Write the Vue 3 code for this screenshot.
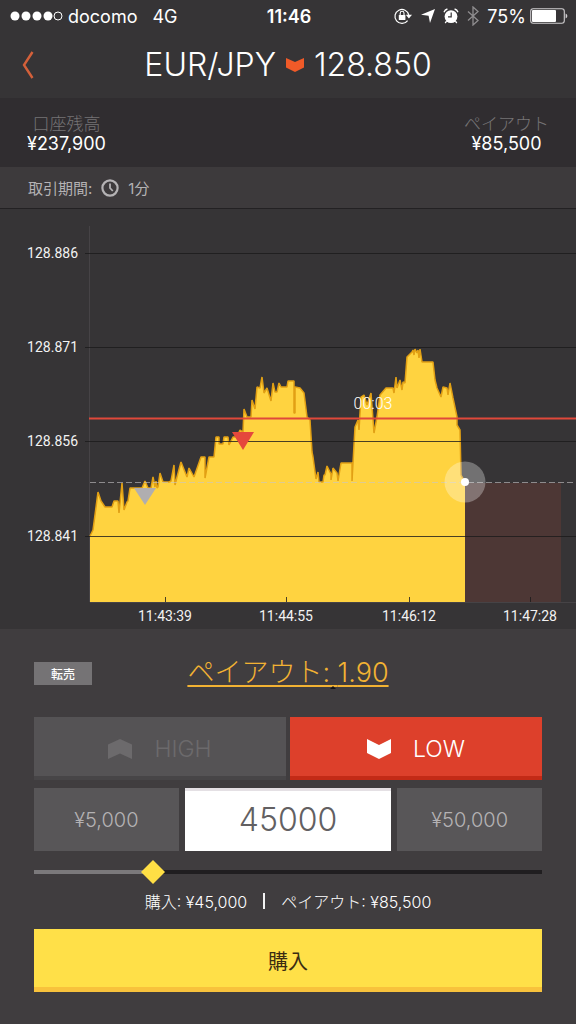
<script setup>
  import { computed, ref } from 'vue'

  const rate = 1.9;
  const minAmount = 1000;
  const maxAmount = 200000;

  const amount = ref(45000);
  const direction = ref('low');

  const formatYen = (value) => '¥' + Math.round(value).toLocaleString('en-US');

  const payout = computed(() => amount.value * rate);

  // the thumb is 24px wide, so its center travels from 12px to 100% - 12px
  const sliderFill = computed(() => {
    const ratio = (amount.value - minAmount) / (maxAmount - minAmount);
    const clamped = Math.min(1, Math.max(0, ratio));

    return `calc(12px + (100% - 24px) * ${ clamped })`;
  });

  // --------------> CHART

  const priceLines = [
    {label: "128.886", y: 44},
    {label: "128.871", y: 138},
    {label: "128.856", y: 232},
    {label: "128.841", y: 327},
  ];

  const timeTicks = [
    {label: "11:43:39", x: 165},
    {label: "11:44:55", x: 286},
    {label: "11:46:12", x: 409},
    {label: "11:47:28", x: 530},
  ];

  const points = [
    [90, 327], [93, 321], [98, 283], [101, 292], [105, 298], [112, 298], [114, 292], [118, 292],
    [119, 304], [122, 274], [124, 301], [127, 293], [128, 292], [130, 279], [142, 279], [145, 272],
    [148, 279], [151, 279], [153, 268], [155, 278], [156, 272], [157, 279], [158, 278], [160, 264],
    [163, 273], [169, 273], [171, 272], [174, 256], [175, 276], [177, 268], [181, 253], [187, 268],
    [189, 259], [194, 268], [201, 248], [205, 248], [205, 269], [209, 248], [214, 248], [216, 228],
    [219, 228], [219, 235], [223, 235], [224, 228], [228, 228], [229, 236], [233, 228], [237, 228],
    [240, 221], [243, 223], [244, 200], [247, 208], [251, 208], [252, 191], [255, 200], [257, 178],
    [260, 179], [262, 168], [264, 184], [267, 179], [271, 192], [273, 174], [275, 183], [277, 183],
    [279, 174], [281, 178], [287, 178], [288, 172], [294, 172], [294, 204], [295, 204], [295, 178],
    [300, 179], [304, 184], [307, 208], [310, 211], [312, 243], [313, 248], [316, 270], [318, 263],
    [319, 273], [323, 273], [324, 266], [325, 266], [327, 257], [331, 265], [331, 271], [333, 259],
    [337, 264], [338, 272], [341, 254], [352, 254], [352, 272], [355, 218], [358, 211], [359, 221],
    [361, 188], [364, 186], [367, 196], [371, 184], [374, 224], [377, 208], [380, 186], [386, 179],
    [393, 179], [394, 184], [396, 168], [397, 179], [400, 171], [402, 181], [403, 173], [405, 174],
    [407, 148], [412, 143], [413, 141], [414, 146], [415, 140], [417, 144], [418, 141], [419, 149],
    [420, 140], [422, 153], [433, 153], [435, 171], [437, 179], [441, 188], [443, 178], [447, 179],
    [448, 186], [450, 174], [453, 189], [457, 208], [457, 216], [460, 221], [461, 266], [465, 273],
  ];

  const linePath = computed(() => 'M' + points.map(point => point.join(' ')).join('L'));
  const areaPath = computed(() => `${ linePath.value }V393H90Z`);
</script>

<template>
  <div class="app">

    <div class="statusBar">
      <div class="statusLeft">
        <svg class="signal" viewBox="0 0 53 10" width="53" height="10">
          <circle v-for="n in 4" :cx="n * 11 - 6" cy="5" r="4.5" fill="#fff" />
          <circle cx="48" cy="5" r="4" fill="none" stroke="#fff" />
        </svg>
        <span>docomo</span>
        <span class="network">4G</span>
      </div>
      <div class="clock">11:46</div>
      <div class="statusRight">
        <svg class="iconLock" viewBox="0 0 20 18" width="20" height="18">
          <path d="M14.6 13.6A7 7 0 1 1 15.8 8" fill="none" stroke="#fff" stroke-width="1.2" />
          <path d="M12.8 7.8h6.2l-3.1 3.8z" fill="#fff" />
          <rect x="5.8" y="8" width="6.6" height="5" rx=".6" fill="#fff" />
          <path d="M7.2 8V6.2a1.9 1.9 0 0 1 3.8 0V8" fill="none" stroke="#fff" stroke-width="1.1" />
        </svg>
        <svg class="iconArrow" viewBox="0 0 14 14" width="14" height="14">
          <path d="M14 0L9 14 7.6 6.8 0 5.8z" fill="#fff" />
        </svg>
        <svg class="iconAlarm" viewBox="0 0 16 16" width="16" height="16">
          <circle cx="8" cy="8.6" r="6.4" fill="#fff" />
          <path d="M8.2 4.6v4.2H5" fill="none" stroke="#363436" stroke-width="1.2" />
          <path d="M1 4.2A5 5 0 0 1 4.4 1M15 4.2A5 5 0 0 0 11.6 1M3.6 13.2l-1.4 1.8M12.4 13.2l1.4 1.8" fill="none" stroke="#fff" stroke-width="1.3" />
        </svg>
        <svg class="iconBluetooth" viewBox="0 0 12 20" width="12" height="20">
          <path d="M1 5.5l10 9-5 4.5V1l5 4.5-10 9" fill="none" stroke="#8f8d8f" stroke-width="1.3" />
        </svg>
        <span>75%</span>
        <svg class="iconBattery" viewBox="0 0 38 16" width="38" height="16">
          <rect x=".7" y=".7" width="33.6" height="14.6" rx="2.5" fill="none" stroke="#cfcdcf" stroke-width="1.1" />
          <rect x="2" y="2" width="24" height="12" rx="1" fill="#fff" />
          <path d="M35.6 5.4a2.8 2.8 0 0 1 0 5.2z" fill="#cfcdcf" />
        </svg>
      </div>
    </div>

    <header class="header">
      <button class="back" type="button" aria-label="戻る">
        <svg viewBox="0 0 12 28" width="12" height="28">
          <path d="M10.5 1L2 14l8.5 13" fill="none" stroke="#d4603a" stroke-width="2.4" />
        </svg>
      </button>
      <h1 class="pair">
        <span>EUR/JPY</span>
        <svg viewBox="0 0 18 14" width="18" height="14">
          <path d="M0 0l9 4 9-4v9.5L9 14 0 9.5z" fill="#f05a28" />
        </svg>
        <span>128.850</span>
      </h1>
    </header>

    <section class="balances">
      <div class="balance">
        <span class="balanceLabel">口座残高</span>
        <span class="balanceValue">¥237,900</span>
      </div>
      <div class="balance">
        <span class="balanceLabel">ペイアウト</span>
        <span class="balanceValue">{{ formatYen(payout) }}</span>
      </div>
    </section>

    <div class="period">
      <span>取引期間:</span>
      <svg viewBox="0 0 18 18" width="18" height="18">
        <circle cx="9" cy="9" r="7.6" fill="none" stroke="#b4b2b4" stroke-width="2.2" />
        <path d="M9 4.4V9l2.8 3" fill="none" stroke="#b4b2b4" stroke-width="1.8" />
      </svg>
      <span>1分</span>
    </div>

    <svg class="chart" viewBox="0 0 576 420">
      <path class="axis" d="M89.5 17V393M90 393.5H576" />
      <rect class="expiry" x="465" y="274" width="96" height="119" />
      <path class="area" :d="areaPath" />
      <path class="line" :d="linePath" />

      <g v-for="item in priceLines">
        <path class="grid" :d="`M85 ${ item.y }.5H576`" />
        <text class="chartText" x="78" :y="item.y + 5" text-anchor="end">{{ item.label }}</text>
      </g>
      <g v-for="item in timeTicks">
        <path class="tick" :d="`M${ item.x }.5 388V393`" />
        <text class="chartText" :x="item.x" y="412" text-anchor="middle">{{ item.label }}</text>
      </g>

      <path class="current" d="M90 273.5H576" />
      <path class="entry" d="M89 209.5H576" />
      <text class="countdown" x="373" y="200" text-anchor="middle">00:03</text>

      <path d="M134 279h22l-11 17z" fill="#b0aeb0" />
      <path d="M232 223h22l-11 18z" fill="#e5483c" />
      <circle cx="465" cy="273" r="20.5" fill="#fff" fill-opacity=".3" />
      <circle cx="465" cy="273" r="4" fill="#fff" />
    </svg>

    <main class="trade">
      <div class="payoutRow">
        <button class="resell" type="button">転売</button>
        <a class="payoutLink" href="#">ペイアウト:<span class="payoutMark">&nbsp;</span>1.90</a>
      </div>

      <div class="directions">
        <button
          class="direction"
          :class="{ activeHigh: direction === 'high' }"
          type="button"
          @click="direction = 'high'"
        >
          <svg viewBox="0 0 24 20" width="24" height="20">
            <path d="M0 5.5L12 0l12 5.5V20l-12-5.5L0 20z" fill="currentColor" />
          </svg>
          <span>HIGH</span>
        </button>
        <button
          class="direction"
          :class="{ activeLow: direction === 'low' }"
          type="button"
          @click="direction = 'low'"
        >
          <svg viewBox="0 0 24 20" width="24" height="20">
            <path d="M0 0l12 6 12-6v14l-12 6-12-6z" fill="currentColor" />
          </svg>
          <span>LOW</span>
        </button>
      </div>

      <div class="amounts">
        <button class="preset" type="button" @click="amount = 5000">¥5,000</button>
        <input v-model.number="amount" class="amountInput" type="text" inputmode="numeric" aria-label="金額" />
        <button class="preset" type="button" @click="amount = 50000">¥50,000</button>
      </div>

      <input
        v-model.number="amount"
        class="slider"
        type="range"
        :min="minAmount"
        :max="maxAmount"
        step="1000"
        aria-label="金額"
        :style="{ '--fill': sliderFill }"
      />

      <div class="summary">
        <span>購入: {{ formatYen(amount) }}</span>
        <span class="divider"></span>
        <span>ペイアウト: {{ formatYen(payout) }}</span>
      </div>

      <button class="buy" type="button">購入</button>
    </main>

  </div>
</template>

<style>
  body {
    background-color: #403d3f;
  }
</style>

<style scoped>
  .app {
    display: flex;
    flex-direction: column;
    min-height: 100vh;
    background-color: #403d3f;
    color: #fff;
    font-family: Inter, "Noto Sans CJK JP", sans-serif;
  }

  button,
  input {
    box-sizing: border-box;
    margin: 0;
    padding: 0;
    border: none;
    border-radius: 0;
    font-family: inherit;
  }

  button {
    cursor: pointer;
  }

  svg {
    flex: none;
  }

  /* status bar */

  .statusBar {
    display: grid;
    grid-template-columns: 1fr auto 1fr;
    align-items: center;
    height: 32px;
    padding: 0 8px 0 10px;
    background-color: #363436;
    font-size: 18px;
  }

  .statusLeft,
  .statusRight {
    display: flex;
    align-items: center;
  }

  .statusLeft {
    gap: 5px;
  }

  .network {
    margin-left: 10px;
  }

  .clock {
    font-weight: 600;
  }

  .statusRight {
    justify-content: flex-end;
    gap: 8px;
  }

  .iconBattery {
    margin-left: -4px;
  }

  /* header */

  .header {
    display: grid;
    grid-template-columns: 40px 1fr 40px;
    align-items: center;
    height: 66px;
    padding: 0 8px;
    background-color: #363436;
  }

  .back {
    display: flex;
    align-items: center;
    justify-content: center;
    height: 44px;
    background: none;
  }

  .pair {
    display: flex;
    align-items: center;
    justify-content: center;
    gap: 10px;
    margin: 0;
    font-size: 32px;
    font-weight: 300;
    line-height: 40px;
  }

  /* balances */

  .balances {
    display: flex;
    justify-content: space-between;
    padding: 16px 27px 13px;
    background-color: #302d30;
  }

  .balance {
    display: flex;
    flex-direction: column;
    align-items: center;
    line-height: 20px;
  }

  .balanceLabel {
    color: #767476;
    font-size: 17px;
    font-weight: 300;
  }

  .balanceValue {
    font-size: 18px;
  }

  .period {
    display: flex;
    align-items: center;
    gap: 9px;
    height: 41px;
    padding: 0 28px;
    border-bottom: 1px solid #232123;
    background-color: #3d3a3c;
    color: #b4b2b4;
    font-size: 15px;
  }

  /* chart */

  .chart {
    display: block;
    width: 100%;
    background-color: #363436;
  }

  .chartText {
    fill: #f2f2f2;
    font-family: Roboto, sans-serif;
    font-size: 14px;
  }

  .countdown {
    fill: #fff;
    font-family: Roboto, sans-serif;
    font-size: 16px;
    font-weight: 300;
  }

  .axis {
    fill: none;
    stroke: #464346;
  }

  .expiry {
    fill: #4d3735;
  }

  .area {
    fill: #ffd340;
  }

  .line {
    fill: none;
    stroke: #e2a014;
    stroke-width: 1.5;
    stroke-linejoin: bevel;
  }

  .grid,
  .tick {
    stroke: #1c1a1c;
    stroke-opacity: 0.8;
  }

  .current {
    stroke: #c8c6c8;
    stroke-opacity: 0.6;
    stroke-dasharray: 6 3;
  }

  .entry {
    stroke: #e0483a;
    stroke-width: 2;
  }

  /* trade panel */

  .trade {
    display: flex;
    flex-direction: column;
    padding: 24px 34px 32px;
  }

  .payoutRow {
    display: grid;
    grid-template-columns: 1fr auto 1fr;
    align-items: center;
    height: 40px;
    margin-bottom: 24px;
  }

  .resell {
    width: 58px;
    height: 23px;
    background-color: #757375;
    color: #fff;
    font-size: 12px;
    font-weight: 500;
  }

  .payoutLink {
    color: #f2b233;
    font-size: 27px;
    font-weight: 300;
    line-height: 32px;
    text-decoration: underline;
    text-decoration-thickness: 2px;
    text-underline-offset: 3px;
  }

  .payoutMark {
    position: relative;
  }

  .payoutMark::after {
    content: "";
    position: absolute;
    bottom: 0;
    left: 0;
    width: 6px;
    height: 3px;
    background-color: #151315;
    clip-path: polygon(50% 0, 100% 100%, 0 100%);
  }

  .directions {
    display: grid;
    grid-template-columns: 1fr 1fr;
    gap: 4px;
    margin-bottom: 8px;
  }

  .direction {
    display: flex;
    align-items: center;
    justify-content: center;
    gap: 22px;
    height: 63px;
    background-color: #555355;
    box-shadow: inset 0 -4px #474547;
    color: #6c6a6c;
    font-size: 23px;
    font-weight: 300;
  }

  .activeHigh {
    background-color: #55ac3f;
    box-shadow: inset 0 -4px #3d8a2c;
    color: #fff;
  }

  .activeLow {
    background-color: #dd402b;
    box-shadow: inset 0 -4px #c32a16;
    color: #fff;
  }

  .amounts {
    display: grid;
    grid-template-columns: 7fr 10fr 7fr;
    gap: 6px;
    margin-bottom: 9px;
  }

  .preset,
  .amountInput {
    min-width: 0;
    height: 63px;
    font-weight: 300;
    text-align: center;
  }

  .preset {
    background-color: #585658;
    color: #b4b2b4;
    font-size: 20px;
  }

  .amountInput {
    background-color: #fff;
    box-shadow: inset 0 3px #e4e0e4;
    color: #626062;
    font-size: 32px;
  }

  .slider {
    appearance: none;
    width: 100%;
    height: 24px;
    background: none;
  }

  .slider::-webkit-slider-runnable-track {
    height: 4px;
    background: linear-gradient(to right, #7b797b var(--fill), #201e20 var(--fill));
  }

  .slider::-webkit-slider-thumb {
    appearance: none;
    width: 24px;
    height: 24px;
    margin-top: -10px;
    background-color: #ffdf45;
    clip-path: polygon(50% 0, 100% 50%, 50% 100%, 0 50%);
  }

  .summary {
    display: flex;
    align-items: center;
    justify-content: center;
    gap: 16px;
    height: 34px;
    margin-bottom: 11px;
    font-size: 16px;
    font-weight: 300;
  }

  .divider {
    width: 2px;
    height: 16px;
    background-color: #f2f2f2;
  }

  .buy {
    height: 63px;
    background-color: #ffe048;
    box-shadow: inset 0 -5px #f8c23c;
    color: #3a2c12;
    font-size: 20px;
  }
</style>
